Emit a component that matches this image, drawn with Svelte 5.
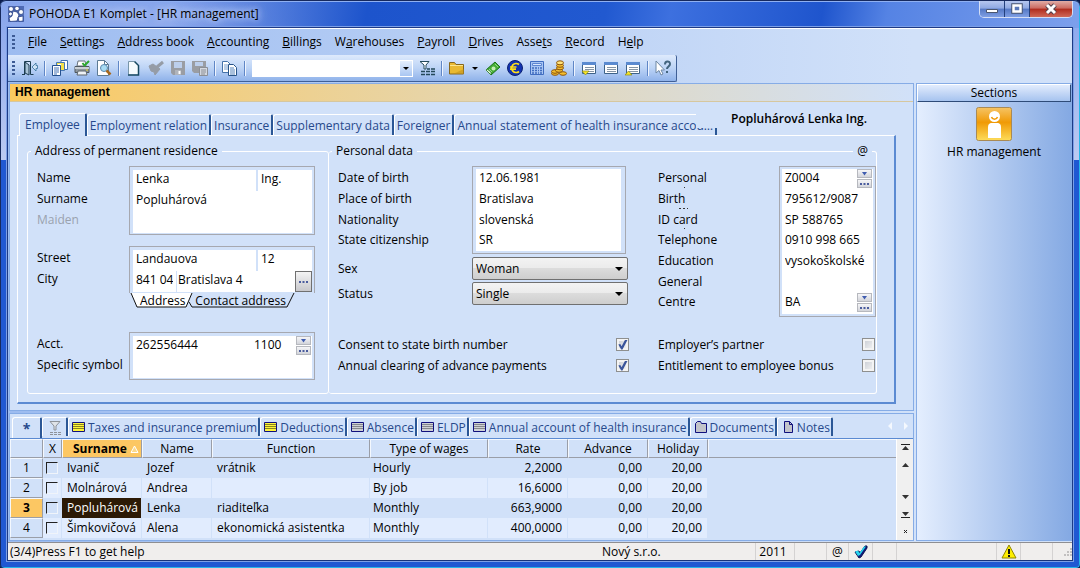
<script>
	const menus = [
		['', 'F', 'ile'],
		['', 'S', 'ettings'],
		['', 'A', 'ddress book'],
		['', 'A', 'ccounting'],
		['', 'B', 'illings'],
		['W', 'a', 'rehouses'],
		['', 'P', 'ayroll'],
		['', 'D', 'rives'],
		['Asse', 't', 's'],
		['', 'R', 'ecord'],
		['H', 'e', 'lp']
	];

	const toolsLeft = ['exit', '|', 'agendas', 'print', 'preview', '|', 'page', 'brush', 'save', 'saveAs', '|', 'copy', '|'];
	const toolsRight = ['filter', '|', 'folder', 'more', 'money', 'euro', 'calc', 'coins', '|', 'winDown', 'win', 'winUp', '|', 'help'];

	const topTabs = [
		'Employee',
		'Employment relation',
		'Insurance',
		'Supplementary data',
		'Foreigner',
		'Annual statement of health insurance accou…'
	];

	const bottomTabs = [
		{ label: 'Taxes and insurance premium', icon: 'gridFull' },
		{ label: 'Deductions', icon: 'gridFull' },
		{ label: 'Absence', icon: 'gridEmpty' },
		{ label: 'ELDP', icon: 'gridEmpty' },
		{ label: 'Annual account of health insurance', icon: 'gridEmpty' },
		{ label: 'Documents', icon: 'docs' },
		{ label: 'Notes', icon: 'note' }
	];

	const rows = [
		{ surname: 'Ivanič', name: 'Jozef', fn: 'vrátnik', wages: 'Hourly', rate: '2,2000' },
		{ surname: 'Molnárová', name: 'Andrea', fn: '', wages: 'By job', rate: '16,6000' },
		{ surname: 'Popluhárová', name: 'Lenka', fn: 'riaditeľka', wages: 'Monthly', rate: '663,9000' },
		{ surname: 'Šimkovičová', name: 'Alena', fn: 'ekonomická asistentka', wages: 'Monthly', rate: '400,0000' }
	];

	let activeTab = $state(0);
	let current = $state(2);
</script>

{#snippet icon(name)}
	<svg width="16" height="16" viewBox="0 0 16 16" aria-hidden="true">
		{#if name === 'exit'}
			<path d="M0 14.5h3M2.5 14.500V1.500h6v13h3" fill="none" stroke="#1c3c50" />
			<path d="M3 2l4 3v10l-4-2z" fill="#a9c3d6" stroke="#1c3c50" />
			<path d="M10 7l4-4v2.500h1.500v3H14V11z" fill="#cfe3f5" stroke="#35719c" stroke-width=".8" />
		{:else if name === 'agendas'}
			<path d="M9 .5h6.500v9H9z" fill="#fff" stroke="#3f6fb0" />
			<path d="M4.500 2.500h8v8h-8z" fill="#f4e04a" stroke="#4778b6" />
			<path d="M6 4h3v2H6z" fill="#fff" />
			<path d="M.5 5.500h8v10h-8z" fill="#fff" stroke="#24508f" />
			<path d="M2 8h5M2 10h5M2 12h5M2 14h3" stroke="#4472b4" />
		{:else if name === 'print'}
			<path d="M4 1h7l1 5H3z" fill="#fff" stroke="#68727c" />
			<path d="M1 6.500h14v6H1z" fill="#8e979f" stroke="#4e575e" />
			<path d="M1 7h14v2H1z" fill="#c9cfd4" />
			<path d="M4 11h8l1 4H3z" fill="#eef2f5" stroke="#5c656c" />
			<path d="M8.500 3l2 2.500L15 1" fill="none" stroke="#2ea82e" stroke-width="2" />
			<path d="M12 10h2" stroke="#e8d21e" />
		{:else if name === 'preview'}
			<path d="M1.500.5h7l4 4v11h-11z" fill="#fff" stroke="#5d7b94" />
			<path d="M8.500.5v4h4" fill="none" stroke="#5d7b94" />
			<circle cx="8" cy="8" r="3.500" fill="#a8dcf4" stroke="#5c89ad" />
			<path d="M10.500 10.500l4 4" stroke="#a8681c" stroke-width="2.500" />
		{:else if name === 'page'}
			<path d="M2.500 1.500h6l4 4v9h-10z" fill="#f4fafd" />
			<path d="M2.500 14.500v-13h6" fill="none" stroke="#7795a8" />
			<path d="M8.500 1.500l4 4v9.500H2" fill="none" stroke="#14475f" stroke-width="1.500" />
		{:else if name === 'brush'}
			<path d="M15 2l-6 5" stroke="#959ca6" stroke-width="3" />
			<path d="M1 6l4-2 7 5-5 6-1-3-3-1z" fill="#959ca6" stroke="#959ca6" />
		{:else if name === 'save'}
			<path d="M1 1h14v14H3l-2-2z" fill="#9a9da3" />
			<path d="M4 2h8v6H4z" fill="#bccfec" />
			<path d="M5 10h6v5H5z" fill="#b0b4bb" />
			<path d="M8.500 11h2v3h-2z" fill="#fff" />
		{:else if name === 'saveAs'}
			<path d="M0 1h14v12H2l-2-2z" fill="#9a9da3" />
			<path d="M3 2h8v4H3z" fill="#bccfec" />
			<path d="M7.500 7.500h8v8h-8z" fill="#d4d8df" stroke="#8b8f96" />
			<path d="M9 10h5M9 12h5M9 14h4" stroke="#8b8f96" />
		{:else if name === 'copy'}
			<path d="M.5 1.500h5l3 3v8h-8z" fill="#fff" stroke="#4673a9" />
			<path d="M2 5h4M2 7h4M2 9h4" stroke="#7aa0ce" />
			<path d="M6.500 4.500h5l3 3v8h-8z" fill="#fff" stroke="#285489" />
			<path d="M8 8h4M8 10h5M8 12h5M8 14h5" stroke="#5583bb" />
		{:else if name === 'filter'}
			<path d="M1 1.500h9L7 5v4H5V5z" fill="#fff" stroke="#244a5a" />
			<path d="M2 11.500h4m1 0h4m1 0h4M2 14.500h4m1 0h4m1 0h4M8 9h3m1 0h4" stroke="#23485a" stroke-width="1.500" />
		{:else if name === 'filterGrey'}
			<path d="M3 2.500h10L9 7v4H7V7z" fill="#dfe3e8" stroke="#8d9299" />
			<path d="M3 13.500h3m1 0h3m1 0h3M3 15.500h3m1 0h3m1 0h3" stroke="#8d9299" />
		{:else if name === 'folder'}
			<path d="M.5 14V2.500h5L7 4.500h7.500V14z" fill="#e9b931" stroke="#85661d" />
			<path d="M1 6h13v-1H1z" fill="#fbe58e" />
			<path d="M4 14L15 9v5z" fill="#b98c1c" opacity=".5" />
		{:else if name === 'money'}
			<path d="M1 10l9-8 5 5-9 8z" fill="#46ad36" stroke="#19711c" />
			<path d="M1 10l5 5v-3l-4-3z" fill="#e6f6df" stroke="#19711c" stroke-width=".6" />
			<circle cx="8.500" cy="8.500" r="2" fill="#c4edb4" />
			<path d="M10 4l3 3M4 9l3 3" stroke="#93d982" />
		{:else if name === 'euro'}
			<circle cx="8" cy="8" r="7.500" fill="#1233b0" stroke="#0b2072" />
			<path d="M12 4.500A4.500 4.500 0 1 0 12 11.500M3 7h6.500M3 9.200h6" fill="none" stroke="#ffe019" stroke-width="1.700" />
		{:else if name === 'calc'}
			<path d="M1.500 1.500h13v13h-13z" fill="#a9c6f3" stroke="#3f6cc0" />
			<path d="M3.500 3.500h9v2h-9z" fill="#d9e7fd" stroke="#5c86d2" />
			<path d="M3 8h2m1 0h2m1 0h1m1 0h2M3 10.500h2m1 0h2m1 0h1m1 0h2M3 13h2m1 0h2m1 0h1m1 0h2" stroke="#3f6cc0" stroke-width="1.500" />
		{:else if name === 'coins'}
			<g fill="#f3bd2e" stroke="#8f560b">
				<ellipse cx="4" cy="13.500" rx="3.500" ry="1.800" />
				<ellipse cx="4" cy="11.500" rx="3.500" ry="1.800" />
				<ellipse cx="12" cy="13.500" rx="3.500" ry="1.800" />
				<ellipse cx="8" cy="10.500" rx="3.500" ry="1.800" />
				<ellipse cx="9" cy="8" rx="3.500" ry="1.800" />
				<ellipse cx="9" cy="5.500" rx="3.500" ry="1.800" />
				<ellipse cx="9" cy="2.800" rx="3.500" ry="2" fill="#ffe27a" />
			</g>
		{:else if name === 'win' || name === 'winDown' || name === 'winUp'}
			<path d="M1.500 2.500h13v11h-13z" fill="#fff" stroke="#3d6288" />
			<path d="M1 2h14v3H1z" fill="#5a8ad0" />
			<path d="M4 7.500h9M4 9.500h9M4 11.500h9" stroke="#8595a5" />
			{#if name === 'winDown'}
				<path d="M1 11h7l-3.500 4z" fill="#f7e625" stroke="#8b8718" stroke-width=".7" />
			{:else if name === 'winUp'}
				<path d="M0 15h7L3.500 11z" fill="#f7e625" stroke="#8b8718" stroke-width=".7" />
			{/if}
		{:else if name === 'help'}
			<path d="M1 1v12l3-2.500L6 15l2-1-2-4h3.500z" fill="#fff" stroke="#6d87a4" />
			<path d="M10 4.500C10 .5 15 .5 15 4c0 2.500-3 2.500-3 5M12 11v2" fill="none" stroke="#42647e" stroke-width="2" />
		{:else if name === 'gridFull' || name === 'gridEmpty'}
			<path d="M1.500 3.500h12v9h-12z" fill={name === 'gridFull' ? '#fff53a' : '#cfd1d5'} stroke="#10107c" />
			<path d="M2 5.500h11M2 7.500h11M2 9.500h11" stroke={name === 'gridFull' ? '#8a8420' : '#85878c'} />
		{:else if name === 'docs'}
			<path d="M2.500 13.500v-9l2-2h3l1 2h5v9z" fill="#c2c4ca" stroke="#10107c" />
		{:else if name === 'note'}
			<path d="M4.500 2.500h5l3 3v8h-8z" fill="#c2c4ca" stroke="#10107c" />
			<path d="M9.500 2.500v3h3" fill="none" stroke="#10107c" />
		{/if}
	</svg>
{/snippet}

{#snippet spin(label)}
	<span class="spin">
		<button aria-label="{label} list">
			<svg width="9" height="6" viewBox="0 0 9 6"><path d="M2 1h5L4.500 4.500z" fill="#3f5caf" /></svg>
		</button>
		<button aria-label="{label} detail">
			<svg width="9" height="4" viewBox="0 0 9 4"><path d="M0 1h2v2H0zM3.500 1h2v2h-2zM7 1h2v2H7z" fill="#4a5c9e" /></svg>
		</button>
	</span>
{/snippet}

<div class="window">
	<header class="titlebar">
		<svg width="16" height="16" viewBox="0 0 16 16" aria-hidden="true">
			<path d="M0 0h16v16H0z" fill="#4c68b4" />
			<g fill="#fff" stroke="#2a4388" stroke-width=".8">
				<circle cx="3" cy="3" r="2.500" />
				<circle cx="9" cy="2.500" r="2.300" />
				<circle cx="13" cy="6" r="2.500" />
				<circle cx="2.500" cy="8" r="2" />
				<path d="M5 5l4 1 2 3-2 6-7 .5L1 12l3-2z" />
				<path d="M10 11l5-1v5l-4 .500z" />
			</g>
		</svg>
		<h1>POHODA E1 Komplet - [HR management]</h1>
		<div class="caption">
			<button aria-label="Minimize">
				<svg width="12" height="12" viewBox="0 0 12 12"><path d="M.5 6.500h11v3H.5z" fill="#fff" stroke="#4a5670" /></svg>
			</button>
			<button aria-label="Maximize">
				<svg width="12" height="12" viewBox="0 0 12 12"><path d="M2.500 2.500h7v6h-7z" fill="none" stroke="#4a5670" stroke-width="4.500" /><path d="M2.500 2.500h7v6h-7z" fill="#5a78b8" stroke="#fff" stroke-width="2.500" /></svg>
			</button>
			<button class="close" aria-label="Close">
				<svg width="14" height="12" viewBox="0 0 14 12"><path d="M3 2l8 8M11 2l-8 8" stroke="#53404c" stroke-width="5" /><path d="M3 2l8 8M11 2l-8 8" stroke="#fff" stroke-width="3" /></svg>
			</button>
		</div>
	</header>

	<div class="client">
		<nav class="menu">
			<span class="grip"></span>
			{#each menus as [before, key, after]}
				<button>{before}<u>{key}</u>{after}</button>
			{/each}
		</nav>

		<div class="toolbar">
			<span class="grip"></span>
			{#each toolsLeft as tool}
				{#if tool === '|'}
					<span class="sep"></span>
				{:else}
					<button class="tool" aria-label={tool}>{@render icon(tool)}</button>
				{/if}
			{/each}
			<div class="combo">
				<input type="text" aria-label="Query" />
				<button aria-label="Open list"><span class="caret"></span></button>
			</div>
			{#each toolsRight as tool}
				{#if tool === '|'}
					<span class="sep"></span>
				{:else if tool === 'more'}
					<button class="more" aria-label="More folders"><span class="caret"></span></button>
				{:else}
					<button class="tool" aria-label={tool}>{@render icon(tool)}</button>
				{/if}
			{/each}
		</div>

		<div class="workspace">
			<main>
				<section class="panel detail">
					<h2>HR management</h2>
					<div class="strip">
						{#each topTabs as tab, i}
							<button class="tab" class:active={activeTab === i} onclick={() => (activeTab = i)}>{tab}</button>
						{/each}
						<strong class="person">Popluhárová Lenka Ing.</strong>
					</div>

					<div class="pane">
						<fieldset class="address">
							<legend>Address of permanent residence</legend>
							<div class="block names">
								<div class="labels">
									<label for="name">Name</label>
									<label for="surname">Surname</label>
									<label for="maiden" class="dim">Maiden</label>
								</div>
								<div class="box">
									<div class="line split">
										<input id="name" value="Lenka" />
										<input class="short" aria-label="Title" value="Ing." />
									</div>
									<div class="line"><input id="surname" value="Popluhárová" /></div>
									<div class="line"><input id="maiden" value="" /></div>
								</div>
							</div>

							<div class="block place">
								<div class="labels">
									<label for="street">Street</label>
									<label for="city">City</label>
								</div>
								<div class="stack">
									<div class="box">
										<div class="line split">
											<input id="street" value="Landauova" />
											<input class="short" aria-label="House number" value="12" />
										</div>
										<div class="line">
											<input class="zip" aria-label="ZIP" value="841 04" />
											<input id="city" value="Bratislava 4" />
											<button class="dots" aria-label="Choose city">
												<svg width="9" height="4" viewBox="0 0 9 4"><path d="M0 1h2v2H0zM3.500 1h2v2h-2zM7 1h2v2H7z" fill="#4a5c9e" /></svg>
											</button>
										</div>
									</div>
									<div class="sheets">
										<svg width="166" height="15" viewBox="0 0 166 15" aria-hidden="true">
											<path d="M1 0l6 14h49l6-14z" fill="#fff" />
											<path d="M1 0l6 14h49l6-14M59 9l3 5h95l7-14" fill="none" stroke="#111" />
										</svg>
										<button>Address</button>
										<button>Contact address</button>
									</div>
								</div>
							</div>

							<div class="block account">
								<div class="labels">
									<label for="acct">Acct.</label>
									<label for="symbol">Specific symbol</label>
								</div>
								<div class="box">
									<div class="line">
										<input id="acct" value="262556444" />
										<input class="bank" aria-label="Bank code" value="1100" />
										{@render spin('Account')}
									</div>
									<div class="line"><input id="symbol" value="" /></div>
								</div>
							</div>
						</fieldset>

						<fieldset class="personal">
							<legend>Personal data</legend>
							<span class="at">@</span>
							<div class="columns">
								<div class="col birth">
									<div class="block">
										<div class="labels">
											<label for="dob">Date of birth</label>
											<label for="pob">Place of birth</label>
											<label for="nationality">Nationality</label>
											<label for="citizenship">State citizenship</label>
										</div>
										<div class="box tight">
											<div class="line"><input id="dob" value="12.06.1981" /></div>
											<div class="line"><input id="pob" value="Bratislava" /></div>
											<div class="line"><input id="nationality" value="slovenská" /></div>
											<div class="line"><input id="citizenship" value="SR" /></div>
										</div>
									</div>
									<div class="choice">
										<label for="sex">Sex</label>
										<span class="select">
											<select id="sex"><option>Woman</option><option>Man</option></select>
										</span>
									</div>
									<div class="choice">
										<label for="status">Status</label>
										<span class="select">
											<select id="status"><option>Single</option><option>Married</option></select>
										</span>
									</div>
								</div>

								<div class="col ids">
									<div class="block">
										<div class="labels">
											<label for="pid" class="cut">Personal</label>
											<label for="birthno" class="cut wide">Birth</label>
											<label for="idcard" class="cut">ID card</label>
											<label for="phone">Telephone</label>
											<label for="education">Education</label>
											<label for="general">General</label>
											<label for="centre">Centre</label>
										</div>
										<div class="box tight">
											<div class="line"><input id="pid" value="Z0004" />{@render spin('Personal')}</div>
											<div class="line"><input id="birthno" value="795612/9087" /></div>
											<div class="line"><input id="idcard" value="SP 588765" /></div>
											<div class="line"><input id="phone" value="0910 998 665" /></div>
											<div class="line"><input id="education" value="vysokoškolské" /></div>
											<div class="line"><input id="general" value="" /></div>
											<div class="line"><input id="centre" value="BA" />{@render spin('Centre')}</div>
										</div>
									</div>
								</div>

								<div class="checks">
									<label>Consent to state birth number <input type="checkbox" checked /></label>
									<label>Annual clearing of advance payments <input type="checkbox" checked /></label>
								</div>
								<div class="checks">
									<label>Employer’s partner <input type="checkbox" /></label>
									<label>Entitlement to employee bonus <input type="checkbox" /></label>
								</div>
							</div>
						</fieldset>
					</div>
				</section>

				<section class="panel list">
					<div class="strip lower">
						<button class="tab star active">*</button>
						<button class="tab funnel" aria-label="Filter">{@render icon('filterGrey')}</button>
						{#each bottomTabs as tab}
							<button class="tab">{@render icon(tab.icon)}<span>{tab.label}</span></button>
						{/each}
						<span class="arrows">
							<svg width="22" height="10" viewBox="0 0 22 10"><path d="M5 1v8L1 5zM17 1v8l4-4z" fill="#f4f8fe" /></svg>
						</span>
					</div>

					<div class="sheet">
						<table>
							<colgroup>
								<col class="w-num" /><col class="w-x" /><col class="w-80" /><col class="w-70" /><col class="w-fn" />
								<col class="w-type" /><col class="w-80" /><col class="w-80" /><col class="w-60" /><col />
							</colgroup>
							<thead>
								<tr>
									<th></th>
									<th>X</th>
									<th class="sorted">
										Surname
										<svg width="9" height="8" viewBox="0 0 9 8"><path d="M4.500 1L8 7.500H1z" fill="#fbd98c" stroke="#fff" /></svg>
									</th>
									<th>Name</th>
									<th>Function</th>
									<th>Type of wages</th>
									<th>Rate</th>
									<th>Advance</th>
									<th>Holiday</th>
									<th></th>
								</tr>
							</thead>
							<tbody>
								{#each rows as row, i}
									<tr class:current={current === i} onclick={() => (current = i)}>
										<th scope="row">{i + 1}</th>
										<td class="mark"><input type="checkbox" aria-label="Mark {row.surname}" /></td>
										<td class="key">{row.surname}</td>
										<td>{row.name}</td>
										<td>{row.fn}</td>
										<td class="wages">{row.wages}</td>
										<td class="num">{row.rate}</td>
										<td class="num">0,00</td>
										<td class="num">20,00</td>
										<td class="rest"></td>
									</tr>
								{/each}
							</tbody>
						</table>
						<div class="scroll">
							<button aria-label="First"><svg width="9" height="7" viewBox="0 0 9 7"><path d="M0 .5h9" stroke="#222" /><path d="M1 6h7L4.500 2z" fill="#333" /></svg></button>
							<button aria-label="Up"><svg width="9" height="7" viewBox="0 0 9 7"><path d="M1 6h7L4.500 2z" fill="#333" /></svg></button>
							<span class="track"></span>
							<button aria-label="Down"><svg width="9" height="7" viewBox="0 0 9 7"><path d="M1 1h7L4.500 5z" fill="#333" /></svg></button>
							<button aria-label="Last"><svg width="9" height="7" viewBox="0 0 9 7"><path d="M1 1h7L4.500 5z" fill="#333" /><path d="M0 6.500h9" stroke="#222" /></svg></button>
							<button aria-label="Close list"><svg width="9" height="7" viewBox="0 0 9 7"><path d="M3 2l3 3M6 2L3 5" stroke="#222" /></svg></button>
						</div>
					</div>
				</section>
			</main>

			<aside class="panel sections">
				<h2>Sections</h2>
				<a href="#hr">
					<svg width="36" height="34" viewBox="0 0 36 34" aria-hidden="true">
						<defs>
							<linearGradient id="amber" x1="0" y1="0" x2="0" y2="1">
								<stop offset="0" stop-color="#f6c465" />
								<stop offset=".45" stop-color="#f09a06" />
								<stop offset="1" stop-color="#fddc5a" />
							</linearGradient>
						</defs>
						<rect x=".5" y=".5" width="35" height="33" rx="2" fill="url(#amber)" stroke="#a98a55" />
						<circle cx="18.500" cy="9.500" r="5.500" fill="#fff" />
						<path d="M15.500 10c1 3 5 3 6 0" fill="none" stroke="#f09a06" stroke-width="1.500" />
						<path d="M12 31V20c0-3 2-4 3-4h7c1 0 3 1 3 4v11z" fill="#fff" />
					</svg>
					HR management
				</a>
			</aside>
		</div>

		<footer>
			<span class="hint">(3/4)Press F1 to get help</span>
			<span class="company">Nový s.r.o.</span>
			<span class="cell year">2011</span>
			<span class="cell blank"></span>
			<span class="cell mail">@</span>
			<span class="cell tick">
				<svg width="14" height="14" viewBox="0 0 14 14"><path d="M1 7l4-1 1 2 5-7 2 0v2L7 12 5 13z" fill="#111a7c" stroke="#0c1050" /><path d="M1 6.500l3-1 1.500 2.500L10 1.500h2L6 10 4 11z" fill="#27d3ee" /></svg>
			</span>
			<span class="cell gap"></span>
			<span class="cell long"></span>
			<span class="cell warn">
				<svg width="16" height="15" viewBox="0 0 16 15"><path d="M8 1l7 13H1z" fill="#ffee00" stroke="#8f8600" /><path d="M8 5v5M8 11v2" stroke="#111" stroke-width="2" /></svg>
			</span>
			<span class="cell blank"></span>
			<span class="cell size">
				<svg width="9" height="9" viewBox="0 0 9 9"><path d="M7 1h2v2H7zM4 4h2v2H4zM7 4h2v2H7zM1 7h2v2H1zM4 7h2v2H4zM7 7h2v2H7z" fill="#c2c0c0" /></svg>
			</span>
		</footer>
	</div>
</div>

<style>
	:global(body) {
		margin: 0;
		background: #0a1c4e;
	}

	.window,
	.window button,
	.window input,
	.window select {
		font-family: 'Open Sans', 'Noto Sans', sans-serif;
		font-size: 12px;
		color: #000;
	}

	.window {
		box-sizing: border-box;
		min-height: 100vh;
		display: flex;
		flex-direction: column;
		padding: 0 7px 7px;
		border-radius: 6px 6px 4px 4px;
		background:
			linear-gradient(100deg, transparent 16%, #1d54cc 34%, #2159d0 56%, #3d70df 62%, #1f55cd 76%, #5583e4 82%, #7da0ec 100%) 0 0 / 100% 28px no-repeat,
			linear-gradient(#86a4ec, #bccaf2) 0 0 / 100% 160px no-repeat,
			#2058d2;
		box-shadow: inset 0 1px #16295e, inset 0 2px #8fb0f2, inset 1px 0 #16295e, inset -1px 0 #27b6e8, inset 0 -1px #27b6e8;
	}

	button {
		background: none;
		border: 0;
		padding: 0;
		margin: 0;
		white-space: nowrap;
	}

	h1,
	h2 {
		margin: 0;
		font-weight: normal;
	}

	svg {
		display: block;
		flex: none;
	}

	/* Title bar */
	.titlebar {
		display: flex;
		align-items: flex-start;
		gap: 2px;
		height: 27px;
		padding-left: 1px;
	}

	.titlebar > svg {
		margin-top: 6px;
	}

	.titlebar h1 {
		flex: 1;
		font-size: 12px;
		line-height: 16px;
		padding: 6px 3px;
		text-shadow: 0 0 6px #b9ccf6, 0 0 8px #b9ccf6, 0 0 10px #b9ccf6;
	}

	.caption {
		display: flex;
		border: 1px solid #d4def5;
		border-top: 0;
		border-radius: 0 0 5px 5px;
		overflow: hidden;
		margin-top: 1px;
	}

	.caption button {
		display: flex;
		align-items: center;
		justify-content: center;
		width: 25px;
		height: 16px;
		border-right: 1px solid #24407c;
		background: linear-gradient(#b6c7ef, #8ea8e2 45%, #5578c4 50%, #7f9fe4);
	}

	.caption .close {
		width: 42px;
		border-right: 0;
		background: linear-gradient(#e0aca6, #cc6a60 45%, #b02c1e 50%, #cf6858);
	}

	.client {
		flex: 1;
		display: flex;
		flex-direction: column;
		border: 1px solid #1d3a86;
		border-bottom-color: #17337a;
		box-shadow: 0 0 0 1px #7c9fe6;
		background: linear-gradient(90deg, #9dbcf0, #d1e1f9 85%);
	}

	/* Menu and toolbar */
	.menu,
	.toolbar {
		display: flex;
		align-items: center;
	}

	.menu {
		height: 27px;
		gap: 13px;
		padding-left: 4px;
		border-top: 1px solid #fff;
		box-sizing: border-box;
	}

	.menu button {
		line-height: 20px;
	}

	.grip {
		width: 3px;
		height: 14px;
		background: repeating-linear-gradient(#3c5a94 0 2px, transparent 2px 4px);
	}

	.toolbar {
		align-self: flex-start;
		height: 27px;
		box-sizing: border-box;
		padding: 0 2px 0 4px;
		border-right: 1px solid #3f5f96;
		border-bottom: 1px solid #3f5f96;
		border-radius: 0 2px 2px 0;
		background: linear-gradient(#deeafc, #bdd4f6 50%, #8fb2ea);
	}

	.toolbar .grip {
		margin-right: 4px;
	}

	.tool {
		width: 22px;
		height: 22px;
		display: flex;
		align-items: center;
		justify-content: center;
	}

	.sep {
		width: 1px;
		height: 15px;
		margin: 0 3px;
		background: #5f86c6;
		border-right: 1px solid #eef4fe;
	}

	.combo {
		display: flex;
		width: 161px;
		height: 17px;
		margin: 0 3px;
		background: #fff;
	}

	.combo input {
		flex: 1;
		min-width: 0;
		border: 0;
		padding: 0 3px;
		background: #fff;
	}

	.combo button,
	.more {
		width: 14px;
		display: flex;
		align-items: center;
		justify-content: center;
	}

	.combo button {
		margin: 1px;
		width: 12px;
		background: linear-gradient(#e5effd, #a9c6f2);
	}

	.caret {
		border: 3px solid transparent;
		border-top-color: #000;
		border-bottom: 0;
	}

	/* Workspace */
	.workspace {
		flex: 1;
		display: grid;
		grid-template-columns: minmax(0, 1fr) 156px;
		gap: 2px;
		padding: 1px 0 0 1px;
	}

	main {
		display: flex;
		flex-direction: column;
		gap: 2px;
	}

	.panel {
		border: 1px solid #86ace6;
		background: #d1e1f9;
		box-sizing: border-box;
	}

	.detail {
		padding-bottom: 6px;
	}

	.detail h2 {
		font: bold 12px/17px 'Liberation Sans', sans-serif;
		padding-left: 5px;
		border-bottom: 1px solid #d6c79f;
		background: linear-gradient(90deg, #fbc95f, #d1e1f9);
	}

	.strip {
		position: relative;
		display: flex;
		align-items: flex-end;
		height: 24px;
		padding: 9px 9px 0;
	}

	.tab {
		flex: none;
		display: flex;
		align-items: center;
		gap: 1px;
		height: 21px;
		padding: 0 2px;
		border-top: 1px solid #fff;
		border-left: 1px solid #fff;
		border-right: 2px solid #2b5796;
		border-radius: 3px 2px 0 0;
	}

	.window .tab {
		color: #27498c;
	}

	.tab.active {
		height: 23px;
		margin-bottom: -1px;
		padding: 0 5px 2px;
		background: #d1e1f9;
		z-index: 1;
	}

	.person {
		position: absolute;
		right: 16px;
		top: 8px;
		padding: 0 30px 0 35px;
		line-height: 18px;
		font-weight: 600;
		background: #d1e1f9;
	}

	.pane {
		display: flex;
		margin: 0 17px 0 7px;
		padding: 6px 17px 8px 9px;
		border-top: 1px solid #fff;
		border-left: 1px solid #fff;
		border-right: 2px solid #5b8ad2;
		border-bottom: 2px solid #5b8ad2;
	}

	fieldset {
		margin: 0;
		min-width: 0;
		border: 1px solid #fff;
		border-radius: 3px;
		padding: 0;
		box-sizing: border-box;
	}

	legend {
		line-height: 18px;
		margin-left: -6px;
		padding: 0 4px;
	}

	.address {
		width: 302px;
		flex: none;
		padding: 6px 13px 13px 9px;
	}

	.personal {
		position: relative;
		flex: 1;
		border-left: 0;
		padding: 6px 0 15px 9px;
	}

	.at {
		position: absolute;
		right: 4px;
		top: -18px;
		padding: 0 4px;
		line-height: 18px;
		background: #d1e1f9;
	}

	.block {
		display: flex;
	}

	.labels {
		flex: none;
		display: flex;
		flex-direction: column;
		padding-top: 1px;
	}

	.labels label {
		line-height: 21px;
		height: 21px;
		white-space: nowrap;
	}

	.address .labels {
		width: 92px;
	}

	.dim {
		color: #9aa2ae;
	}

	.box {
		flex: 1;
		min-width: 0;
		box-sizing: border-box;
		border: 1px solid #a6a8b0;
		padding: 3px 2px 1px 3px;
	}

	.line {
		display: flex;
		height: 21px;
		background: #fff;
	}

	.columns .labels label:nth-child(3n),
	.tight .line:nth-child(3n),
	.birth .line:last-child {
		height: 20px;
	}

	.line input {
		flex: 1;
		min-width: 0;
		height: 17px;
		border: 0;
		outline: 0;
		padding: 0 3px;
		box-sizing: border-box;
		background: #fff;
	}

	.split {
		gap: 2px;
		background: #d1e1f9;
	}

	.split input {
		height: 21px;
		padding-bottom: 4px;
	}

	.line .short {
		flex: 0 0 54px;
	}

	.line .zip {
		flex: 0 0 43px;
	}

	.line .zip + input {
		height: 21px;
		padding: 0 2px 4px 1px;
		border-left: 1px solid #d1e1f9;
	}

	.line .bank {
		flex: 0 0 45px;
	}

	.place {
		margin-top: 11px;
	}

	.stack {
		flex: 1;
		min-width: 0;
	}

	.dots {
		width: 17px;
		height: 21px;
		display: flex;
		align-items: center;
		justify-content: center;
		border: 1px solid #707070;
		box-sizing: border-box;
		background: linear-gradient(#f4f4f4, #c8c8cc);
	}

	.place .box {
		border-bottom: 0;
	}

	.sheets {
		position: relative;
		display: flex;
		gap: 10px;
		height: 15px;
		padding-left: 11px;
	}

	.sheets svg {
		position: absolute;
		left: 1px;
		top: 0;
	}

	.sheets button {
		position: relative;
		line-height: 14px;
	}

	.account {
		margin-top: 24px;
	}

	.spin {
		display: flex;
		flex-direction: column;
		gap: 1px;
		width: 15px;
		height: 19px;
		margin-right: 1px;
	}

	.spin button {
		flex: 1;
		display: flex;
		align-items: center;
		justify-content: center;
		border: 1px solid #b6b8be;
		background: linear-gradient(#f6f6f8, #d2d4da);
	}

	.columns {
		display: grid;
		grid-template-columns: 292px 218px;
		justify-content: start;
		column-gap: 28px;
	}

	.col {
		min-width: 0;
	}

	.birth .block {
		width: 288px;
		margin-bottom: 2px;
	}

	.birth .labels {
		width: 134px;
	}

	.ids .labels {
		width: 121px;
	}

	.tight {
		padding: 2px 4px 2px 3px;
	}

	.ids .tight {
		padding: 2px;
	}

	.cut {
		position: relative;
	}

	/* remains of the second label line */
	.cut::after {
		content: '';
		position: absolute;
		left: 26px;
		bottom: 0;
		width: 1px;
		height: 1px;
		background: #333;
	}

	.cut.wide::after {
		left: 21px;
		width: 9px;
		background: repeating-linear-gradient(90deg, #333 0 2px, transparent 2px 4px);
	}

	.choice {
		display: flex;
		align-items: center;
		height: 25px;
	}

	.choice label {
		width: 134px;
	}

	.select {
		position: relative;
		width: 156px;
	}

	.select select {
		appearance: none;
		width: 100%;
		height: 23px;
		padding: 0 3px;
		border: 1px solid #707070;
		border-radius: 2px;
		background: linear-gradient(#f3f3f3, #ebebeb 50%, #dcdcdc 50%, #cecece);
		display: block;
	}

	.select::after {
		content: '';
		position: absolute;
		right: 5px;
		top: 10px;
		border: 4px solid transparent;
		border-top-color: #000;
		border-bottom: 0;
		pointer-events: none;
	}

	.checks {
		margin-top: 17px;
	}

	.checks label {
		display: flex;
		align-items: center;
		justify-content: space-between;
		height: 21px;
		white-space: nowrap;
	}

	.checks input {
		appearance: none;
		width: 13px;
		height: 13px;
		margin: 0 1px 0 0;
		border: 1px solid #8e8f8f;
		background: linear-gradient(135deg, #c6cad2, #f6f6f6);
		box-shadow: inset 0 0 0 2px #f4f4f4;
	}

	.checks input:checked::before {
		content: '';
		display: block;
		width: 11px;
		height: 11px;
		background: #3b559b;
		clip-path: polygon(12% 50%, 30% 45%, 42% 65%, 72% 8%, 95% 8%, 50% 95%, 38% 95%);
	}

	/* List */
	.list {
		flex: 1;
		display: flex;
		flex-direction: column;
	}

	.lower {
		height: 22px;
		padding: 2px 2px 0;
		border-bottom: 1px solid #5b8ad2;
	}

	.lower .tab {
		height: 18px;
		margin-bottom: 2px;
		padding: 0 1px 0 2px;
		box-sizing: content-box;
	}

	.lower .star {
		width: 27px;
		height: 20px;
		justify-content: center;
		margin-bottom: 0;
		padding: 0;
		font-size: 14px;
		font-weight: bold;
	}

	.lower .funnel {
		width: 20px;
		justify-content: center;
	}

	.arrows {
		margin: 0 2px 7px auto;
	}

	.sheet {
		flex: 1;
		display: flex;
	}

	table {
		flex: 1;
		table-layout: fixed;
		border-collapse: separate;
		border-spacing: 0;
		width: 100%;
		align-self: flex-start;
	}

	.w-num { width: 33px; }
	.w-x { width: 19px; }
	.w-60 { width: 60px; }
	.w-70 { width: 70px; }
	.w-80 { width: 80px; }
	.w-fn { width: 158px; }
	.w-type { width: 118px; }

	th {
		font-weight: normal;
		padding: 0;
	}

	thead th {
		height: 19px;
		line-height: 17px;
		box-sizing: border-box;
		border-right: 1px solid #9a9ea8;
		border-bottom: 1px solid #9a9ea8;
		border-left: 1px solid #f4f8fe;
		border-top: 1px solid #f4f8fe;
	}

	thead th:last-child {
		border-right: 0;
	}

	.sorted {
		font-weight: bold;
		text-align: right;
		padding-right: 2px;
		background: #fcc763;
		white-space: nowrap;
	}

	.sorted svg {
		display: inline-block;
	}

	tbody th {
		border-right: 1px solid #9a9ea8;
		border-bottom: 1px solid #9a9ea8;
		border-left: 1px solid #f4f8fe;
		border-top: 1px solid #f4f8fe;
		line-height: 18px;
	}

	td {
		height: 20px;
		line-height: 20px;
		box-sizing: border-box;
		padding: 0 5px;
		white-space: nowrap;
		border-right: 1px solid #d1e1f9;
	}

	tbody tr:nth-child(even) td:not(.rest) {
		background: #e1ecfe;
	}

	td.wages {
		padding-left: 3px;
	}

	td.num {
		text-align: right;
	}

	.current th {
		font-weight: bold;
		background: #fcc763;
	}

	.current .key {
		color: #fff;
		background: #2c1a06;
	}

	.mark {
		padding: 0 0 0 3px;
	}

	.mark input {
		appearance: none;
		display: block;
		width: 12px;
		height: 12px;
		margin: 0;
		border: 1px solid #f0f4fa;
		border-top: 1px solid #222;
		border-left: 1px solid #222;
		box-sizing: border-box;
	}

	.scroll {
		display: flex;
		flex-direction: column;
		width: 16px;
		background: #f0f0f0;
		border-left: 1px solid #fff;
	}

	.scroll button {
		height: 17px;
		display: flex;
		align-items: center;
		justify-content: center;
	}

	.track {
		flex: 1;
	}

	/* Sections */
	.sections {
		background: linear-gradient(90deg, #e4eefe, #84a9e3);
	}

	.sections h2 {
		line-height: 16px;
		text-align: center;
		border: 1px solid #fff;
		border-right-color: #2e4b78;
		border-bottom-color: #2e4b78;
		background: linear-gradient(#e2ecfd, #a6c3ef);
		font-size: 12px;
	}

	.sections a {
		display: flex;
		flex-direction: column;
		align-items: center;
		gap: 2px;
		padding-top: 5px;
		line-height: 18px;
		color: #000;
		text-decoration: none;
	}

	/* Status bar */
	footer {
		display: flex;
		height: 18px;
		line-height: 17px;
		margin-top: 1px;
		background: #f0eeed;
		border-top: 1px solid #8e8e92;
		box-sizing: border-box;
		white-space: nowrap;
	}

	.hint {
		flex: 1;
		padding-left: 2px;
	}

	.company {
		width: 153px;
	}

	.cell {
		display: flex;
		align-items: center;
		justify-content: center;
		border-left: 1px solid #d4d2d2;
		box-sizing: border-box;
	}

	.year { width: 39px; padding-right: 4px; }
	.blank { width: 32px; }
	.mail { width: 22px; }
	.tick { width: 24px; }
	.gap { width: 24px; }
	.long { width: 100px; }
	.warn { width: 24px; }
	.size { width: 20px; justify-content: flex-end; }
</style>
